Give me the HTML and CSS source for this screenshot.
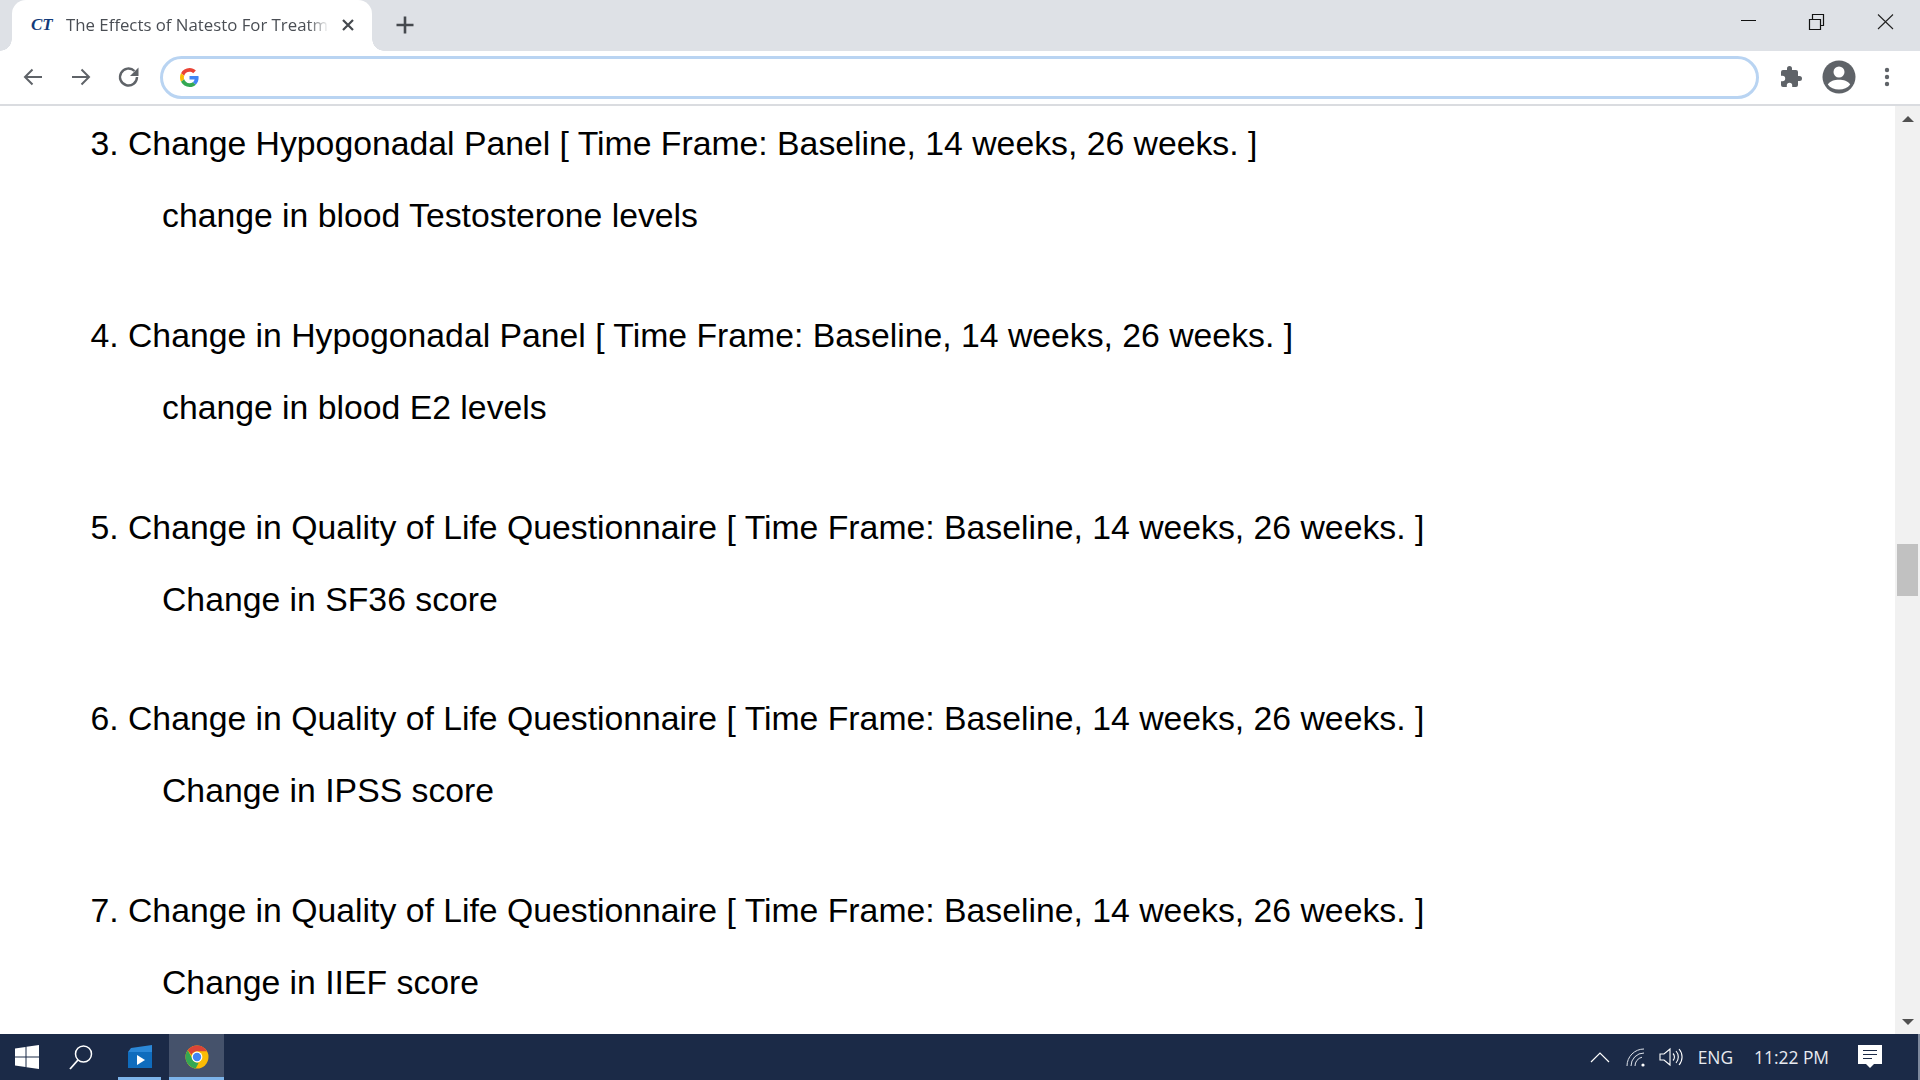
FILE: index.html
```html
<!DOCTYPE html>
<html lang="en">
<head>
<meta charset="utf-8">
<title>The Effects of Natesto For Treatment</title>
<link rel="stylesheet" href="styles.css">
</head>
<body>
<div class="screen">
  <header class="titlebar">
    <div class="tab">
      <span class="favicon">CT</span>
      <span class="tab-title">The Effects of Natesto For Treatm</span>
      <svg class="tab-close" viewBox="0 0 14 14" width="14" height="14"><path d="M2 2l10 10M12 2L2 12" stroke="#45494e" stroke-width="2.200" fill="none"/></svg>
    </div>
    <svg class="new-tab" viewBox="0 0 20 20" width="20" height="20"><path d="M10 1.500v17M1.500 10h17" stroke="#45494e" stroke-width="2.600" fill="none"/></svg>
    <div class="win-controls">
      <svg class="win-btn" viewBox="0 0 68 51" width="68" height="51"><path d="M25 20.500h15" stroke="#111" stroke-width="1" fill="none"/></svg>
      <svg class="win-btn" viewBox="0 0 68 51" width="68" height="51"><path d="M25.500 19.500h11v10h-11zM28.500 19v-4.500h11v11h-3" stroke="#111" stroke-width="1.200" fill="none"/></svg>
      <svg class="win-btn" viewBox="0 0 68 51" width="68" height="51"><path d="M26 14.500l15 14.500M41 14.500L26 29" stroke="#222" stroke-width="1.100" fill="none"/></svg>
    </div>
  </header>

  <nav class="toolbar">
    <svg class="nav-icon" viewBox="0 0 24 24" width="24" height="24"><path d="M21 12H4M11.500 4.500L4 12l7.500 7.500" stroke="#5f6368" stroke-width="2" fill="none"/></svg>
    <svg class="nav-icon" viewBox="0 0 24 24" width="24" height="24"><path d="M3 12h17M12.500 4.500L20 12l-7.500 7.500" stroke="#5f6368" stroke-width="2" fill="none"/></svg>
    <svg class="nav-icon" viewBox="0 0 24 24" width="24" height="24"><path d="M20 12a8.500 8.500 0 1 1-2.500-6" stroke="#5f6368" stroke-width="2.400" fill="none"/><path d="M21.500 2.500v8.500H13z" fill="#5f6368"/></svg>
    <div class="omnibox">
      <svg viewBox="0 0 48 48" width="19" height="19"><path fill="#ea4335" d="M24 9.500c3.500 0 6.700 1.200 9.200 3.600l6.900-6.900C35.900 2.400 30.500 0 24 0 14.600 0 6.500 5.400 2.600 13.200l8 6.200C12.400 13.700 17.700 9.500 24 9.500z"/><path fill="#4285f4" d="M47 24.500c0-1.600-.2-3.100-.4-4.500H24v9h12.900c-.6 3-2.300 5.500-4.800 7.200l7.700 6C44.300 38 47 31.800 47 24.500z"/><path fill="#fbbc05" d="M10.500 28.600c-.5-1.400-.8-3-.8-4.600s.3-3.200.8-4.600l-8-6.200C.9 16.500 0 20.100 0 24s.9 7.500 2.600 10.800l7.900-6.200z"/><path fill="#34a853" d="M24 48c6.500 0 11.900-2.100 15.900-5.800l-7.700-6c-2.200 1.400-4.900 2.300-8.200 2.300-6.300 0-11.600-4.200-13.500-10L2.600 34.800C6.500 42.600 14.600 48 24 48z"/></svg>
    </div>
    <svg class="tool-puzzle" viewBox="0 0 24 24" width="24" height="24"><path fill="#5f6368" d="M20.500 11H19V7a2 2 0 0 0-2-2h-4V3.500a2.500 2.500 0 0 0-5 0V5H4a2 2 0 0 0-2 2v3.800h1.500a2.700 2.700 0 0 1 0 5.400H2V20a2 2 0 0 0 2 2h3.800v-1.500a2.700 2.700 0 0 1 5.400 0V22H17a2 2 0 0 0 2-2v-4h1.500a2.500 2.500 0 0 0 0-5z"/></svg>
    <svg class="tool-avatar" viewBox="0 0 34 34" width="34" height="34"><circle cx="17" cy="17" r="16.500" fill="#5f6368"/><circle cx="17" cy="12" r="5.500" fill="#fff"/><path fill="#fff" d="M5.800 24.500C8 21 12.500 19.800 17 19.800s9 1.200 11.200 4.700C25.800 27.800 21.700 29.500 17 29.500S8.200 27.800 5.800 24.500z"/></svg>
    <svg class="tool-menu" viewBox="0 0 8 24" width="8" height="24"><circle cx="4" cy="5" r="2.200" fill="#5f6368"/><circle cx="4" cy="12" r="2.200" fill="#5f6368"/><circle cx="4" cy="19" r="2.200" fill="#5f6368"/></svg>
  </nav>

  <div class="viewport">
    <main class="content">
      <ol class="outcomes" start="3">
        <li class="outcome"><p class="outcome-title">Change Hypogonadal Panel [ Time Frame: Baseline, 14 weeks, 26 weeks. ]</p><p class="outcome-desc">change in blood Testosterone levels</p></li>
        <li class="outcome"><p class="outcome-title">Change in Hypogonadal Panel [ Time Frame: Baseline, 14 weeks, 26 weeks. ]</p><p class="outcome-desc">change in blood E2 levels</p></li>
        <li class="outcome"><p class="outcome-title">Change in Quality of Life Questionnaire [ Time Frame: Baseline, 14 weeks, 26 weeks. ]</p><p class="outcome-desc">Change in SF36 score</p></li>
        <li class="outcome"><p class="outcome-title">Change in Quality of Life Questionnaire [ Time Frame: Baseline, 14 weeks, 26 weeks. ]</p><p class="outcome-desc">Change in IPSS score</p></li>
        <li class="outcome"><p class="outcome-title">Change in Quality of Life Questionnaire [ Time Frame: Baseline, 14 weeks, 26 weeks. ]</p><p class="outcome-desc">Change in IIEF score</p></li>
      </ol>
    </main>
    <aside class="scrollbar">
      <span class="arrow-up"></span>
      <div class="track"><div class="thumb"></div></div>
      <span class="arrow-down"></span>
    </aside>
  </div>

  <footer class="taskbar">
    <svg class="task-start" viewBox="0 0 24 24" width="24" height="24"><path fill="#fff" d="M0 3.500L10.500 2v9.500H0zM11.500 1.800L24 0v11.500H11.500zM0 12.500h10.500V22L0 20.500zM11.500 12.500H24V24l-12.500-1.800z"/></svg>
    <svg class="task-search" viewBox="0 0 26 26" width="26" height="26"><circle cx="15.500" cy="10" r="8" stroke="#fff" stroke-width="1.500" fill="none"/><path d="M10 16L2 25" stroke="#fff" stroke-width="1.800" fill="none"/></svg>
    <div class="task-app task-video">
      <svg viewBox="0 0 26 26" width="26" height="26"><path fill="#0f6cbd" d="M1 8h24v16H1z"/><path fill="#2b88d8" d="M1 8l3-4 21-3v7z"/><path fill="#fff" d="M10 11l8 5-8 5z"/></svg>
    </div>
    <div class="task-app task-chrome">
      <svg viewBox="0 0 24 24" width="24" height="24"><circle cx="12" cy="12" r="11.500" fill="#fbbc05"/><path fill="#db4437" d="M12 .5a11.500 11.500 0 0 1 10 5.800H12a5.700 5.700 0 0 0-5.300 3.600L2.700 5.300A11.500 11.500 0 0 1 12 .5z"/><path fill="#34a853" d="M2.700 5.300l4.500 8a5.700 5.700 0 0 0 6.500 4.400l-3 5.700A11.500 11.500 0 0 1 2.700 5.300z"/><circle cx="12" cy="12" r="5.400" fill="#fff"/><circle cx="12" cy="12" r="4.200" fill="#4285f4"/></svg>
    </div>
    <div class="tray">
      <svg class="tray-chevron" viewBox="0 0 20 12" width="20" height="12"><path d="M1 11l9-9 9 9" stroke="#fff" stroke-width="1.200" fill="none"/></svg>
      <svg class="tray-wifi" viewBox="0 0 20 20" width="20" height="20"><path d="M1 19A17 17 0 0 1 18 2M5 19A13 13 0 0 1 18 6M9 19a9 9 0 0 1 7-8.800" stroke="#dfe3ea" stroke-width="1" fill="none"/><circle cx="17" cy="18" r="1.600" fill="#fff"/></svg>
      <svg viewBox="0 0 24 20" width="24" height="20"><path d="M1 7h4l6-5v16l-6-5H1zM14 6.500a5 5 0 0 1 0 7M17 4a9 9 0 0 1 0 12M20 2a12 12 0 0 1 0 16" stroke="#fff" stroke-width="1.100" fill="none"/></svg>
      <span class="tray-lang">ENG</span>
      <span class="tray-time">11:22 PM</span>
      <svg class="tray-notify" viewBox="0 0 24 24" width="24" height="24"><path fill="#fff" d="M0 0h24v19h-8l-4 4-4-4H0z"/><path d="M5 5.500h14M5 9.500h14M5 13.500h9" stroke="#1b2a47" stroke-width="1.200" fill="none"/></svg>
    </div>
    <div class="show-desktop"></div>
  </footer>
</div>
</body>
</html>
```

FILE: styles.css
```css
* { box-sizing: border-box; }
html, body { margin: 0; height: 100%; overflow: hidden; }
body { background: #fff; font-family: "Open Sans", "Liberation Sans", sans-serif; }

.screen { display: flex; flex-direction: column; width: 1920px; height: 1080px; }

.titlebar { display: flex; align-items: flex-start; height: 51px; flex: none; background: #dee1e6; padding-left: 12px; }
.tab { position: relative; display: flex; align-items: center; width: 360px; height: 51px; background: #fff; border-radius: 14px 14px 0 0; padding: 0 17px 2px 19px; }
.tab::before, .tab::after { content: ""; position: absolute; bottom: 0; width: 12px; height: 12px; }
.tab::before { left: -12px; background: radial-gradient(circle at 0 0, #dee1e6 11.500px, #fff 12px); }
.tab::after { right: -12px; background: radial-gradient(circle at 100% 0, #dee1e6 11.500px, #fff 12px); }
.favicon { flex: none; width: 24px; margin-right: 11px; font: italic bold 17px "Liberation Serif", serif; color: #123a7a; }
.tab-title { flex: 1; min-width: 0; white-space: nowrap; font-size: 16.800px; color: #4a4e54; -webkit-mask-image: linear-gradient(to right, #000 92%, transparent 100%); mask-image: linear-gradient(to right, #000 92%, transparent 100%); }
.tab-close { flex: none; margin-left: 12px; }
.new-tab { flex: none; margin: 15px 0 0 23px; }
.win-controls { display: flex; margin-left: auto; }
.win-btn { display: block; }

.toolbar { display: flex; align-items: center; height: 55px; flex: none; padding: 0 0 1px 21px; background: #fff; border-bottom: 2px solid #dadce0; }
.nav-icon { flex: none; margin-right: 24px; }
.nav-icon:nth-child(3) { margin-right: 19px; }
.omnibox { display: flex; align-items: center; flex: none; width: 1599px; height: 43px; padding-left: 17px; border: 3px solid #b9d4f2; border-radius: 22px; background: #fff; }
.tool-puzzle { flex: none; margin-left: 20px; }
.tool-avatar { flex: none; margin-left: 19px; }
.tool-menu { flex: none; margin-left: 27px; }

.viewport { display: flex; flex: 1; min-height: 0; overflow: hidden; }
.content { flex: 1; min-width: 0; overflow: hidden; }
.outcomes { margin: 0; padding: 0 0 0 128px; color: #000; font: 33.750px/48px "Liberation Sans", Arial, sans-serif; }
.outcome { padding-bottom: 58.200px; }
.outcome-title { margin: 13.400px 0 24px; }
.outcome-desc { margin: 0 0 0 34px; }

.scrollbar { display: flex; flex-direction: column; align-items: center; flex: none; width: 25px; background: #f1f1f1; }
.arrow-up, .arrow-down { flex: none; width: 0; height: 0; border-left: 6px solid transparent; border-right: 6px solid transparent; }
.arrow-up { margin: 10px 0 14px; border-bottom: 6px solid #505050; }
.arrow-down { margin: 14px 0 9px; border-top: 6px solid #505050; }
.track { flex: 1; width: 100%; padding: 408px 2px 0; }
.thumb { height: 52px; background: #c1c1c1; }

.taskbar { display: flex; align-items: center; height: 46px; flex: none; background: #1b2a47; color: #fff; padding-left: 15px; }
.task-start { flex: none; }
.task-search { flex: none; margin-left: 29px; }
.task-app { display: flex; align-items: center; justify-content: center; flex: none; height: 46px; box-shadow: inset 0 -3px 0 #7db4ea; }
.task-video { width: 43px; margin-left: 24px; }
.task-chrome { width: 55px; margin-left: 8px; background: #45526b; }
.tray { display: flex; align-items: center; margin-left: auto; font-size: 17.400px; color: #e8ebf0; }
.tray svg { flex: none; margin-right: 14px; }
.tray svg.tray-chevron { margin-right: 16px; }
.tray svg.tray-wifi { margin-right: 13px; }
.tray-lang { margin-left: 1px; }
.tray-time { margin-left: 21px; }
.tray svg.tray-notify { margin: 0 0 0 29px; }
.show-desktop { flex: none; align-self: stretch; width: 2px; margin-left: 36px; background: #7d889c; }
```
